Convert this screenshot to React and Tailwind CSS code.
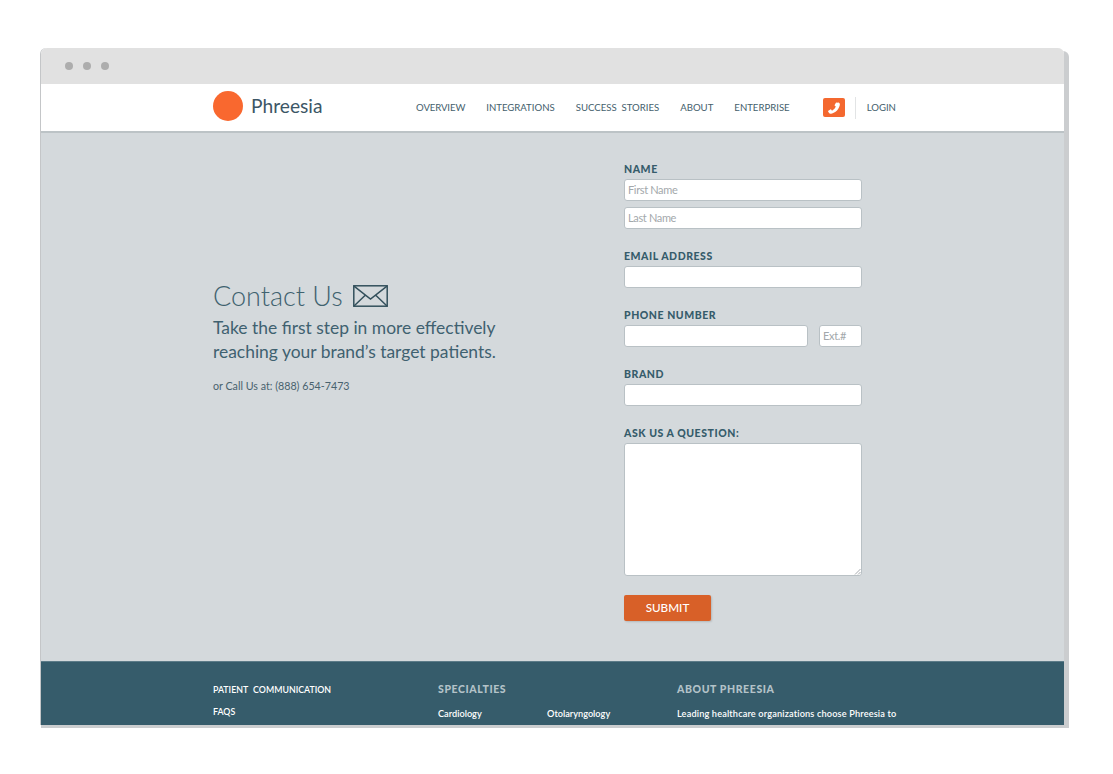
import React from "react";

const font = { fontFamily: '"Lato", "Open Sans", sans-serif' };

function Label({ children, className = "" }) {
  return (
    <div className={"h-[13px] text-[10.5px] leading-[13px] font-black uppercase tracking-[0.55px] text-[#365c6b] " + className}>
      {children}
    </div>
  );
}

function Field({ placeholder, className = "" }) {
  return (
    <div className={"h-[22px] rounded-[3px] border border-[#b9c1c5] bg-white pl-[3px] text-[11px] leading-[20px] tracking-[-0.35px] text-[#a3a8ab] " + className}>
      {placeholder}
    </div>
  );
}

function NavLink({ children, className = "" }) {
  return <span className={"text-[9.6px] leading-none uppercase text-[#44606c] whitespace-nowrap " + className}>{children}</span>;
}

export default function App() {
  return (
    <div className="h-[774px] w-[1113px] bg-white pt-[48px] pl-[41px]" style={font}>
      <div className="flex h-[677px] w-[1023px] flex-col rounded-t-[6px] shadow-[5px_3px_0_#cbcdcf,0_3px_0_#cbcdcf,-1px_0_0_#c4c6c8]">
        <div className="flex h-[36px] items-center gap-[10px] rounded-t-[6px] bg-[#e1e1e1] pl-[24px]">
          <span className="h-[8px] w-[8px] rounded-full bg-[#adadad]" />
          <span className="h-[8px] w-[8px] rounded-full bg-[#adadad]" />
          <span className="h-[8px] w-[8px] rounded-full bg-[#adadad]" />
        </div>

        <header className="flex h-[49px] items-center border-b-2 border-[#bcc3c6] bg-white pl-[172px]">
          <span className="mb-[3px] h-[30px] w-[30px] rounded-full bg-[#f9682f]" />
          <span className="mb-[3px] ml-[8px] w-[165px] text-[19.2px] leading-none text-[#3c5666]">Phreesia</span>
          <nav className="flex items-center gap-[21px]">
            <NavLink className="tracking-[-0.1px]">Overview</NavLink>
            <NavLink>Integrations</NavLink>
            <NavLink className="[word-spacing:2.500px]">Success Stories</NavLink>
            <NavLink>About</NavLink>
            <NavLink>Enterprise</NavLink>
          </nav>
          <span className="ml-[33px] flex h-[19px] w-[22px] items-center justify-center rounded-[2px] bg-[#f4682f]">
            <svg width="14" height="14" viewBox="0 0 24 24" fill="#fff">
              <path d="M20 2.500c1.600 1 2.400 2.300 2 4.200-1.600 7.400-7.300 13.300-14.800 15.200-1.900.4-3.300-.4-4.300-2l-1-1.800c-.3-.6-.1-1.200.4-1.500l3.500-2.100c.5-.3 1.100-.2 1.500.3l1.300 1.700c2.900-1.400 5.300-4 6.500-7l-1.700-1.300c-.5-.4-.6-1-.3-1.500l2.200-3.500c.3-.5 1-.7 1.500-.4z" />
            </svg>
          </span>
          <span className="ml-[10px] h-[22px] w-px bg-[#e2e4e5]" />
          <span className="ml-[11px] flex items-center"><NavLink>Login</NavLink></span>
        </header>

        <main className="flex h-[528px] bg-[#d4d9dc] pl-[172px]">
          <section className="w-[411px] pt-[146px] text-[#3f6170]">
            <div className="flex h-[32px] items-center">
              <h1 className="text-[27px] leading-none font-light text-[#40626f]">Contact Us</h1>
              <svg className="ml-[10px] mt-[2px]" width="35" height="22" viewBox="0 0 35 22" fill="none" stroke="#33505c" strokeWidth="1.5">
                <rect x="0.8" y="0.8" width="33.400" height="20.400" />
                <path d="M1 1.200 17.500 14 34 1.200M1 21 12.500 10M34 21 22.500 10" />
              </svg>
            </div>
            <p className="mt-[5px] text-[17.45px] leading-[24px]">
              Take the first step in more effectively
              <br />
              reaching your brand’s target patients.
            </p>
            <p className="mt-[15px] text-[10.7px] leading-[14px] text-[#48626e]">or Call Us at: (888) 654-7473</p>
          </section>

          <form className="w-[238px] pt-[30px]">
            <Label>Name</Label>
            <Field className="mt-[3px]" placeholder="First Name" />
            <Field className="mt-[6px]" placeholder="Last Name" />
            <Label className="mt-[21px]">Email Address</Label>
            <Field className="mt-[3px]" />
            <Label className="mt-[21px]">Phone Number</Label>
            <div className="mt-[3px] flex justify-between">
              <Field className="w-[184px]" />
              <Field className="w-[43px]" placeholder="Ext.#" />
            </div>
            <Label className="mt-[21px]">Brand</Label>
            <Field className="mt-[3px]" />
            <Label className="mt-[21px]">Ask Us a Question:</Label>
            <div className="relative mt-[3px] h-[133px] rounded-[3px] border border-[#b9c1c5] bg-white">
              <svg className="absolute right-0 bottom-0" width="7" height="7" viewBox="0 0 7 7" stroke="#8f9599" strokeWidth="0.8">
                <path d="M1 6.500 6.500 1M4 6.500 6.500 4" />
              </svg>
            </div>
            <button type="button" className="mt-[19px] h-[26px] w-[87px] rounded-[2px] bg-[#d86028] text-[11.7px] font-medium text-white uppercase shadow-[1px_1px_2px_rgba(0,0,0,0.15)]">
              Submit
            </button>
          </form>
        </main>

        <footer className="flex h-[64px] overflow-hidden border-t border-[#5c7b88] bg-[#365c6b] pl-[172px] pt-[21px] text-white">
          <div className="w-[225px] pt-[1px] text-[8.8px] font-semibold uppercase">
            <div className="h-[12px] leading-[12px] [word-spacing:3px]">Patient Communication</div>
            <div className="mt-[10px] h-[12px] leading-[12px]">FAQs</div>
          </div>
          <div className="w-[239px]">
            <div className="h-[12px] text-[10.5px] leading-[12px] font-black tracking-[0.6px] text-[#b3c2c8] uppercase">Specialties</div>
            <div className="mt-[13px] flex text-[9.2px] leading-[12px] font-semibold">
              <span className="w-[109px]">Cardiology</span>
              <span>Otolaryngology</span>
            </div>
          </div>
          <div>
            <div className="h-[12px] text-[10.5px] leading-[12px] font-black tracking-[0.6px] text-[#b3c2c8] uppercase">About Phreesia</div>
            <div className="mt-[13px] text-[9.2px] leading-[12px] font-semibold tracking-[0.15px] whitespace-nowrap">Leading healthcare organizations choose Phreesia to</div>
          </div>
        </footer>
      </div>
    </div>
  );
}
